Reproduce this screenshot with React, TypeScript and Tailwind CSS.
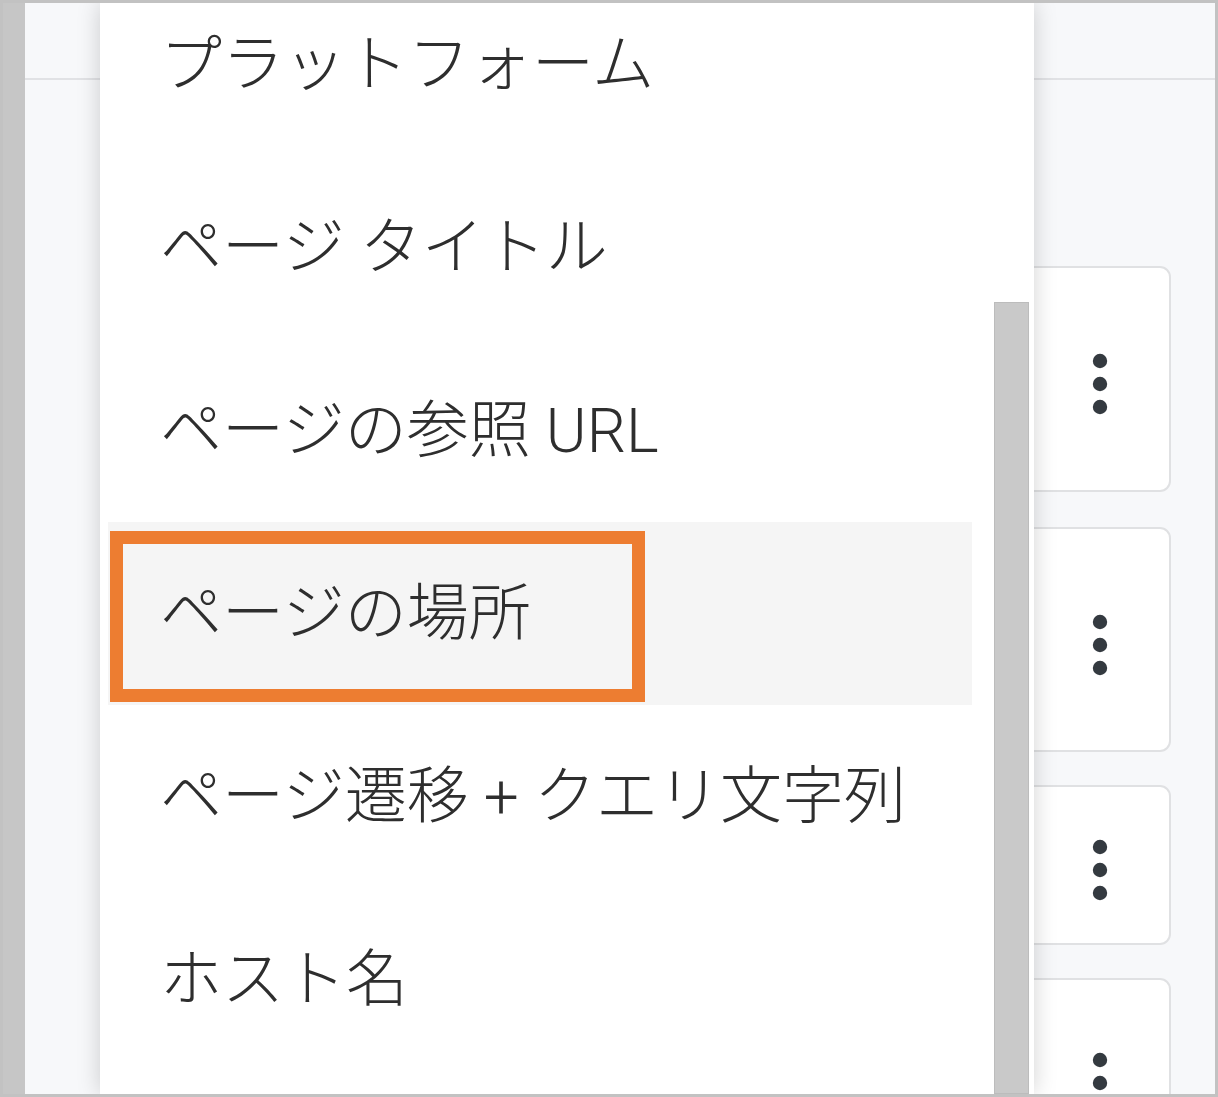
import React from "react";

const items = [
  "プラットフォーム",
  "ページ タイトル",
  "ページの参照 URL",
  "ページの場所",
  "ページ遷移 + クエリ文字列",
  "ホスト名",
];

function Dots() {
  return (
    <svg width="16" height="62" viewBox="0 0 16 62" className="text-[#343a40]">
      <circle cx="8" cy="8" r="7.2" fill="currentColor" />
      <circle cx="8" cy="31" r="7.2" fill="currentColor" />
      <circle cx="8" cy="54" r="7.2" fill="currentColor" />
    </svg>
  );
}

const cards = [
  { h: 226, cls: "mt-0" },
  { h: 225, cls: "mt-[35px]" },
  { h: 160, cls: "mt-[33px]" },
  { h: 200, cls: "mt-[33px]" },
];

export default function App() {
  return (
    <div className="relative w-[1218px] h-[1097px] overflow-hidden border-[3px] border-[#c2c2c2] bg-[#f7f8fa] flex">
      {/* left strip */}
      <div className="w-[22px] shrink-0 bg-[#c6c6c6]" />
      {/* left area */}
      <div className="w-[75px] shrink-0 flex flex-col">
        <div className="h-[77px] border-b-2 border-[#e1e2e5]" />
      </div>
      {/* menu */}
      <div className="relative z-10 w-[934px] shrink-0 bg-white shadow-[0_0_22px_rgba(0,0,0,0.18)] overflow-hidden">
        <div className="-mt-[30px] flex flex-col">
          {items.map((t, i) => (
            <div
              key={t}
              className={
                "ml-[8px] w-[864px] h-[183px] shrink-0 flex items-center pl-[52px] text-[62px] font-light text-[#2e2e2e] whitespace-nowrap leading-none " +
                (i === 3 ? "bg-[#f5f5f5]" : "")
              }
              style={{ fontFamily: 'Roboto, "Noto Sans CJK JP", sans-serif' }}
            >
              {t}
            </div>
          ))}
        </div>
        {/* scrollbar */}
        <div className="absolute right-[5px] top-[299px] bottom-0 w-[35px] bg-[#c9c9c9] border border-[#bcbcbc]" />
      </div>
      {/* right area */}
      <div className="flex-1 flex flex-col">
        <div className="h-[77px] shrink-0 border-b-2 border-[#e1e2e5]" />
        <div className="flex flex-col pt-[186px] pr-[44px] -ml-[60px]">
          {cards.map((c, i) => (
            <div
              key={i}
              className={
                "shrink-0 bg-white border-2 border-[#e0e1e3] rounded-[11px] flex items-center justify-end pr-[61px] pt-[10px] " +
                c.cls
              }
              style={{ height: c.h }}
            >
              <Dots />
            </div>
          ))}
        </div>
      </div>
      {/* annotation */}
      <div className="absolute left-[107px] top-[528px] w-[535px] h-[171px] border-[13px] border-[#ed7d31] z-20" />
    </div>
  );
}
